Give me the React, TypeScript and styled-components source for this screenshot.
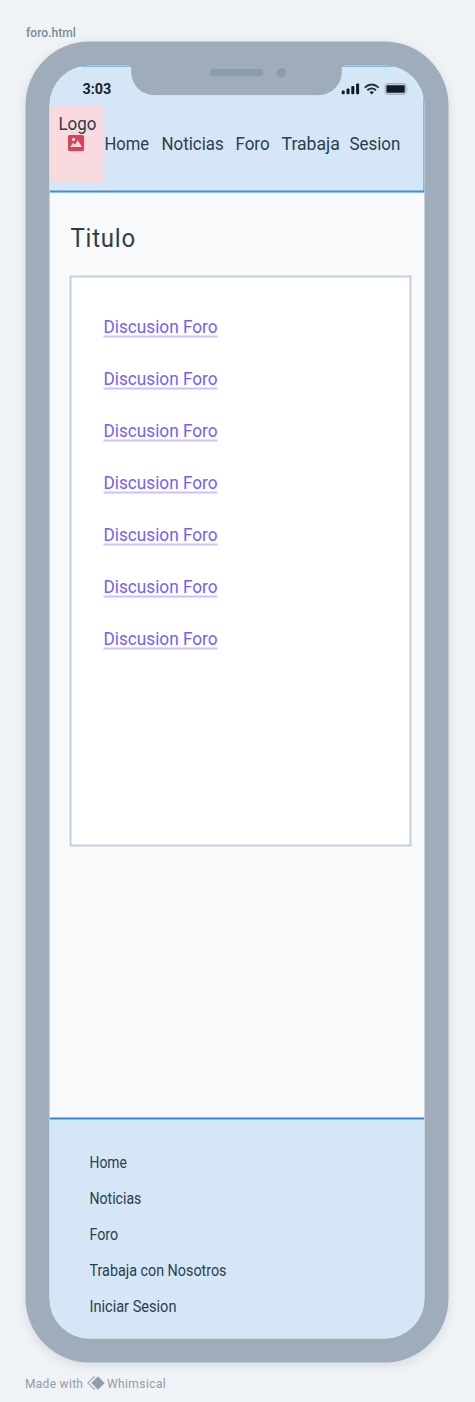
import React from "react";
import styled, { createGlobalStyle } from "styled-components";

const Global = createGlobalStyle`
  *, *::before, *::after { box-sizing: border-box; }
  body { margin: 0; background: #eff3f6; font-family: Roboto, "Liberation Sans", sans-serif; color: #2c3e4c; }
`;

const Page = styled.main`
  width: 475px;
  height: 1402px;
  padding: 24px 0 0 26px;
  overflow: hidden;
  background: #eff3f6;
`;

const Label = styled.span<{ $size: number; $squeeze?: number; $weight?: number; $tracking?: number }>`
  display: inline-block;
  white-space: nowrap;
  font-size: ${(p) => p.$size}px;
  font-weight: ${(p) => p.$weight ?? 400};
  letter-spacing: ${(p) => p.$tracking ?? 0}px;
  transform: scaleX(${(p) => p.$squeeze ?? 1});
  transform-origin: 0 50%;
`;

const FileName = styled.div`
  height: 18px;
  line-height: 15px;
  color: #788c9a;
`;

const Frame = styled.div`
  position: relative;
  width: 423px;
  height: 1321px;
  padding: 24px;
  border-radius: 64px;
  background: #9eadb9;
  box-shadow: 0 3px 10px rgba(60, 80, 100, 0.13);
  transform: translate(-0.5px, -0.5px);
`;

const Screen = styled.div`
  display: flex;
  flex-direction: column;
  width: 375px;
  height: 1273px;
  border-radius: 40px;
  overflow: hidden;
  background: #f8f9fb;
`;

const Header = styled.header`
  height: 127px;
  border: solid #3d8edb;
  border-width: 1px 1px 2px 0;
  background: #d5e6f6;
`;

const StatusBar = styled.div`
  display: flex;
  justify-content: space-between;
  height: 39px;
  padding: 13px 15px 0 33px;
  line-height: 18px;
  color: #17212b;
`;

const StatusIcons = styled.svg`
  margin-top: 1px;
`;

const Notch = styled.svg`
  position: absolute;
  left: 102.5px;
  top: 23px;
`;

const NavRow = styled.div`
  display: flex;
`;

const Logo = styled.div`
  display: flex;
  flex-direction: column;
  width: 54px;
  height: 76px;
  padding: 9px 0 0 9px;
  line-height: 18px;
  background: #f7d9de;
`;

const LogoImage = styled.svg`
  margin: 2px 0 0 9px;
`;

const Nav = styled.nav`
  display: flex;
  padding: 28px 0 0 0.5px;
  line-height: 20px;
`;

const NavItem = styled.a<{ $width: number }>`
  flex: none;
  width: ${(p) => p.$width}px;
`;

const Body = styled.section`
  flex: 1;
  padding: 31px 13px 0 20px;
`;

const Title = styled.h1`
  height: 52px;
  margin: 0;
  padding-left: 1px;
  line-height: 25px;
  font-weight: 400;
`;

const Card = styled.ul`
  height: 571px;
  width: 342px;
  margin: 0;
  padding: 38px 0 0 32px;
  list-style: none;
  border: 2px solid #c3cfda;
  background: #fff;
`;

const Topic = styled.li`
  height: 52px;
`;

const TopicLink = styled.a`
  display: block;
  width: 114px;
  height: 22px;
  line-height: 22px;
  border-bottom: 2px solid #cbc3fc;
  color: #7562f2;
`;

const Footer = styled.footer`
  height: 221px;
  padding: 25px 0 0 40px;
  border-top: 2px solid #3089df;
  background: #d5e6f6;
`;

const FooterItem = styled.div`
  height: 35.9px;
  line-height: 36px;
`;

const Credit = styled.div`
  display: flex;
  align-items: center;
  height: 20px;
  margin: 10px 0 0 -1px;
  line-height: 20px;
  color: #8e9da9;
`;

const CreditPart = styled.span<{ $width: number }>`
  width: ${(p) => p.$width}px;
`;

const CreditMark = styled.svg`
  margin-right: 2px;
`;

const navItems = [
  { text: "Home", width: 57, squeeze: 0.92 },
  { text: "Noticias", width: 74, squeeze: 0.94 },
  { text: "Foro", width: 46, squeeze: 0.94 },
  { text: "Trabaja", width: 68, squeeze: 0.98 },
  { text: "Sesion", width: 56, squeeze: 0.94 },
];

const footerItems = [
  { text: "Home", squeeze: 0.87 },
  { text: "Noticias", squeeze: 0.88 },
  { text: "Foro", squeeze: 0.89 },
  { text: "Trabaja con Nosotros", squeeze: 0.895 },
  { text: "Iniciar Sesion", squeeze: 0.91 },
];

export default function App() {
  return (
    <>
      <Global />
      <Page>
        <FileName>
          <Label $size={12} $weight={500} $squeeze={1.01}>foro.html</Label>
        </FileName>
        <Frame>
          <Screen>
            <Header>
              <StatusBar>
                <Label $size={15} $weight={700} $squeeze={0.96}>3:03</Label>
                <StatusIcons width="68" height="18" viewBox="0 0 68 18" fill="#111b25">
                  <rect x="1.2" y="10" width="3" height="3.8" rx="1" />
                  <rect x="6" y="8" width="3" height="5.8" rx="1" />
                  <rect x="10.8" y="5.5" width="3" height="8.3" rx="1" />
                  <rect x="15.6" y="3" width="3" height="10.8" rx="1" />
                  <g fill="none" stroke="#26303a" strokeWidth="1.8">
                    <path d="M24.2 7.2 Q31.2 .8 38.2 7.2" />
                    <path d="M26.8 9.8 Q31.2 6 35.6 9.8" />
                  </g>
                  <path d="M29 11.6 Q31.2 9.9 33.4 11.6 L31.2 14Z" />
                  <rect x="44.6" y="3.1" width="21" height="10.8" rx="2.5" fill="#c0ccd7" stroke="#a4b0ba" />
                  <rect x="46" y="4.7" width="18.2" height="7.6" rx="1" />
                  <path d="M66.8 6.8 Q68 8.5 66.8 10.2Z" fill="#9caab5" />
                </StatusIcons>
              </StatusBar>
              <NavRow>
                <Logo>
                  <Label $size={18} $squeeze={0.94}>Logo</Label>
                  <LogoImage width="17" height="17" viewBox="0 0 17 17">
                    <rect x=".5" y=".5" width="16" height="16" rx="1.6" fill="#d8435c" />
                    <circle cx="6" cy="4.9" r="1.6" fill="#f7d9de" />
                    <path d="M2.5 12.5 5.6 8.2 7.4 10.2 10.3 5.8 14.5 12.5Z" fill="#f7d9de" />
                  </LogoImage>
                </Logo>
                <Nav>
                  {navItems.map((item) => (
                    <NavItem key={item.text} $width={item.width}>
                      <Label $size={18} $squeeze={item.squeeze}>{item.text}</Label>
                    </NavItem>
                  ))}
                </Nav>
              </NavRow>
            </Header>
            <Body>
              <Title>
                <Label $size={25} $squeeze={0.96} $tracking={0.8}>Titulo</Label>
              </Title>
              <Card>
                {Array.from({ length: 7 }, (_, i) => (
                  <Topic key={i}>
                    <TopicLink>
                      <Label $size={18} $weight={450} $squeeze={0.955}>Discusion Foro</Label>
                    </TopicLink>
                  </Topic>
                ))}
              </Card>
            </Body>
            <Footer>
              {footerItems.map((item) => (
                <FooterItem key={item.text}>
                  <Label $size={16} $squeeze={item.squeeze}>{item.text}</Label>
                </FooterItem>
              ))}
            </Footer>
          </Screen>
          <Notch width="218" height="31" viewBox="0 -1 218 31">
            <path d="M.5 -1 V0 Q2.7 .2 2.7 3 V5.8 C2.7 19.3 12.5 29.7 26.5 29.7 H189.5 C203.5 29.7 213.3 19.3 213.3 5.8 V3 Q213.3 .2 215.5 0 V-1Z" fill="#9eadb9" />
            <rect x="81.5" y="3.6" width="53" height="7.2" rx="3.6" fill="#8c9cab" />
            <circle cx="152.8" cy="7.2" r="4.7" fill="#8c9cab" />
          </Notch>
        </Frame>
        <Credit>
          <CreditPart $width={62}>
            <Label $size={12} $tracking={0.3}>Made with</Label>
          </CreditPart>
          <CreditMark width="18" height="14" viewBox="0 0 18 14">
            <path d="M8 1.5 6.8 1 1 7 6.8 13 8 12.5" fill="none" stroke="#a9b4be" strokeWidth="1.4" />
            <path d="M11 .8 17.2 7 11 13.2 4.8 7Z" fill="#8e9da9" stroke="#8e9da9" strokeLinejoin="round" />
          </CreditMark>
          <CreditPart $width={70}>
            <Label $size={12} $tracking={0.4}>Whimsical</Label>
          </CreditPart>
        </Credit>
      </Page>
    </>
  );
}
